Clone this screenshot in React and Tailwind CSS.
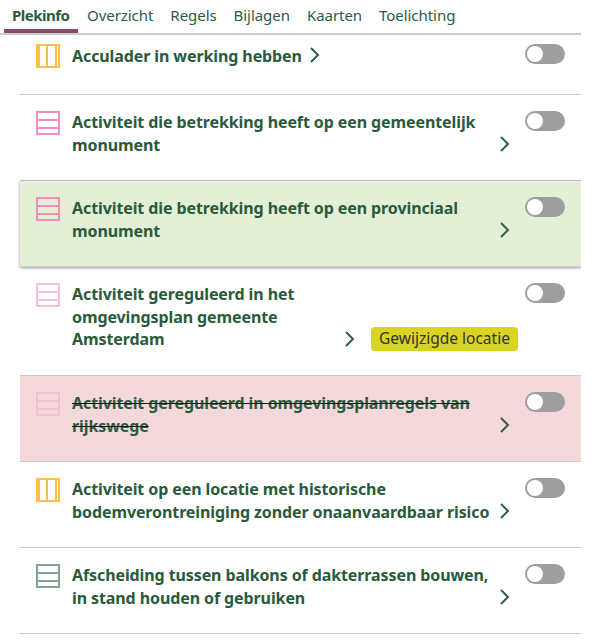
function GridIcon({ kind, color, opacity = 1 }) {
  const holes =
    kind === "v"
      ? "M4 2v20h6V2zM12 2v20h7V2zM21 2v20h1V2z"
      : "M2 2v6h20V2zM2 10v6h20v-6zM2 18v4h20v-4z";
  return (
    <svg width="24" height="24" viewBox="0 0 24 24" className="shrink-0" style={{ opacity }}>
      <path fill={color} fillRule="evenodd" d={"M0 0h24v24H0z" + holes} />
    </svg>
  );
}

function Chevron() {
  return (
    <svg width="24" height="24" viewBox="0 0 24 24" className="shrink-0" fill="none">
      <path d="M9 5 L16 12 L9 19" stroke="#2f6040" strokeWidth="2" />
    </svg>
  );
}

function Toggle() {
  return (
    <div className="w-10 h-5 rounded-full bg-[#9e9e9e] shrink-0 p-0.5 flex">
      <div className="w-4 h-4 rounded-full bg-white" />
    </div>
  );
}

function Row({ icon, lines, textW, badge, strike, bg = "", top = "pt-4", h, inner = "" }) {
  return (
    <div className={`flex items-start pl-4 pr-4 border-b border-[#cccccc] ${top} ${h} ${bg}`}>
      {icon}
      <div className={`flex-1 ml-3 flex items-end ${inner}`}>
        <div
          className={`text-[16px] leading-[22.5px] tracking-[-0.1px] font-bold text-[#2a5a3c] whitespace-nowrap ${strike ? "line-through decoration-[#1a1a1a]" : ""}`}
          style={textW ? { width: textW } : undefined}
        >
          {lines.map((l, i) => (
            <div key={i}>{l}</div>
          ))}
        </div>
        <Chevron />
        {badge && (
          <span className="ml-[10px] h-6 px-2 flex items-center rounded bg-[#d9d422] text-[#333333] text-[15.5px] whitespace-nowrap">
            {badge}
          </span>
        )}
      </div>
      <Toggle />
    </div>
  );
}

export default function App() {
  const tabs = ["Overzicht", "Regels", "Bijlagen", "Kaarten", "Toelichting"];
  return (
    <div className="w-[581px] bg-white" style={{ fontFamily: '"Noto Sans", sans-serif' }}>
      <div className="pl-1 flex gap-px h-[35px] border-b-2 border-[#cccccc] text-[15px] tracking-[-0.05px] text-[#2d5a4a]">
        <div className="px-2 h-[33px] w-[74px] border-b-4 border-[#8a4a6d] font-bold text-[#2a5a3c] leading-[30px] tracking-[-0.5px]">Plekinfo</div>
        {tabs.map((t) => (
          <div key={t} className="px-2 leading-[30px]">{t}</div>
        ))}
      </div>
      <div className="ml-5">
        <Row top="pt-[9px]" h="h-[60px]" inner="-mt-px" icon={<GridIcon kind="v" color="#fdbe4c" />} lines={["Acculader in werking hebben"]} />
        <Row h="h-[86px]" textW={420} icon={<GridIcon kind="h" color="#ef8fbf" />} lines={["Activiteit die betrekking heeft op een gemeentelijk", "monument"]} />
        <Row h="h-[86px]" textW={420} bg="bg-[#e4f0d6] shadow-[0_1px_3px_rgba(0,0,0,0.4)] relative [clip-path:inset(-4px_0_-5px_-4px)]" icon={<GridIcon kind="h" color="#ef8fbf" />} lines={["Activiteit die betrekking heeft op een provinciaal", "monument"]} />
        <Row h="h-[109px]" textW={265} badge="Gewijzigde locatie" icon={<GridIcon kind="h" color="#ef8fbf" opacity={0.55} />} lines={["Activiteit gereguleerd in het", "omgevingsplan gemeente", "Amsterdam"]} />
        <Row h="h-[86px]" textW={420} strike bg="bg-[#f4d8dc]" icon={<GridIcon kind="h" color="#ef8fbf" opacity={0.3} />} lines={["Activiteit gereguleerd in omgevingsplanregels van", "rijkswege"]} />
        <Row h="h-[86px]" textW={420} icon={<GridIcon kind="v" color="#fdbe4c" />} lines={["Activiteit op een locatie met historische", "bodemverontreiniging zonder onaanvaardbaar risico"]} />
        <Row h="h-[86px]" textW={420} icon={<GridIcon kind="h" color="#80a490" />} lines={["Afscheiding tussen balkons of dakterrassen bouwen,", "in stand houden of gebruiken"]} />
      </div>
    </div>
  );
}
